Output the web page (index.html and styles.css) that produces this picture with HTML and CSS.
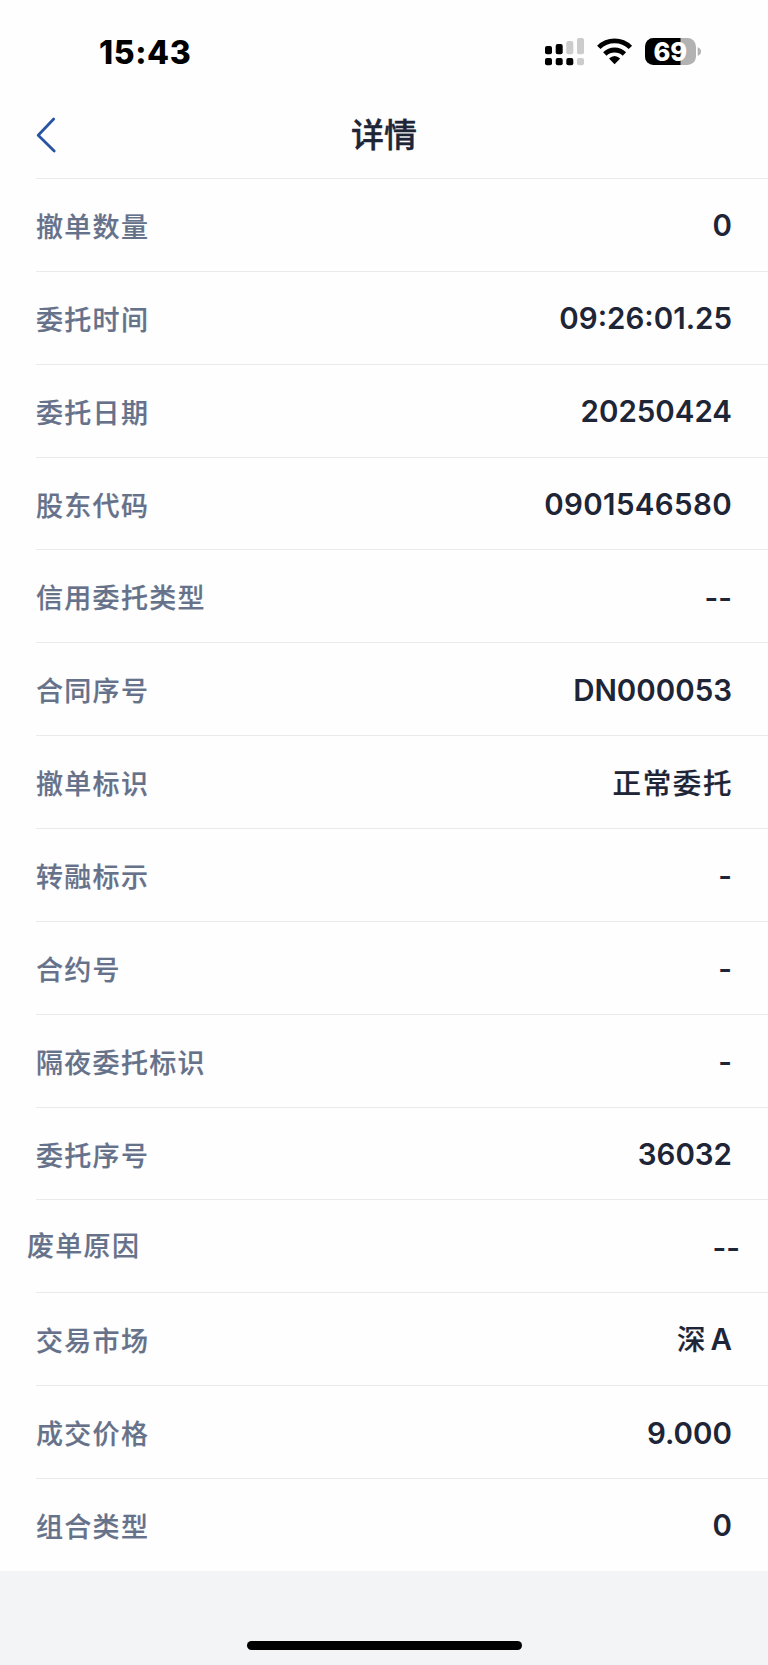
FILE: index.html
```html
<!DOCTYPE html>
<html lang="zh-CN">

<head>
    <meta charset="UTF-8" />
    <meta name="viewport" content="width=device-width, initial-scale=1.0" />
    <title>详情</title>
    <link rel="stylesheet" href="styles.css">
</head>

<body>
    <div class="status-bar">
        <span class="time">15:43</span>
        <svg class="status-icons" width="160" height="30" viewBox="0 0 160 30">
            <!-- dual sim signal -->
            <g fill="#000">
                <rect x="0" y="9" width="7" height="8.3" rx="2" />
                <rect x="10.7" y="7" width="7" height="10.3" rx="2" />
                <rect x="0" y="21" width="7" height="7.3" rx="2" />
                <rect x="10.7" y="21" width="7" height="7.3" rx="2" />
                <rect x="21.3" y="21" width="7" height="7.3" rx="2" />
            </g>
            <g fill="#ccc">
                <rect x="21.3" y="4" width="7" height="13.3" rx="2" />
                <rect x="32" y="1" width="7" height="16.3" rx="2" />
                <rect x="32" y="21" width="7" height="7.3" rx="2" />
            </g>
            <!-- wifi -->
            <g fill="none" stroke="#000" stroke-width="4.8">
                <path d="M53.8 10.4 A22.5 22.5 0 0 1 85.4 10.4" />
                <path d="M59.8 17 A14 14 0 0 1 79.4 17" />
            </g>
            <path d="M64 21.6 Q69.6 16.6 75.2 21.6 L69.6 27.2 Z" fill="#000" />
            <!-- battery -->
            <clipPath id="battery"><rect x="100" y="1" width="51" height="27" rx="8.5" /></clipPath>
            <g clip-path="url(#battery)">
                <rect x="100" y="0" width="51" height="29" fill="#b2b2b2" />
                <rect x="100" y="0" width="35.5" height="29" fill="#000" />
            </g>
            <path d="M152.7 10.3 Q156 11.4 156 14.6 Q156 17.8 152.7 18.9 Z" fill="#b2b2b2" />
            <text class="battery-level" x="125.3" y="23.7" text-anchor="middle">69</text>
        </svg>
    </div>

    <header class="nav-bar">
        <svg class="back" width="22" height="38" viewBox="0 0 22 38">
            <path d="M17.7 3 L2.2 19.2 L18.2 35" fill="none" stroke="#2854a3" stroke-width="2.8" stroke-linecap="round" stroke-linejoin="round" />
        </svg>
        <h1>详情</h1>
    </header>

    <ul class="details">
        <li><span class="label">撤单数量</span><span class="value">0</span></li>
        <li><span class="label">委托时间</span><span class="value">09:26:01.25</span></li>
        <li><span class="label">委托日期</span><span class="value">20250424</span></li>
        <li><span class="label">股东代码</span><span class="value account">0901546580</span></li>
        <li><span class="label">信用委托类型</span><span class="value">--</span></li>
        <li><span class="label">合同序号</span><span class="value">DN000053</span></li>
        <li><span class="label">撤单标识</span><span class="value cjk">正常委托</span></li>
        <li><span class="label">转融标示</span><span class="value">-</span></li>
        <li><span class="label">合约号</span><span class="value">-</span></li>
        <li><span class="label">隔夜委托标识</span><span class="value">-</span></li>
        <li><span class="label">委托序号</span><span class="value">36032</span></li>
        <li class="reason"><span class="label">废单原因</span><span class="value">--</span></li>
        <li><span class="label">交易市场</span><span class="value market"><span class="cjk">深</span> A</span></li>
        <li><span class="label">成交价格</span><span class="value">9.000</span></li>
        <li><span class="label">组合类型</span><span class="value">0</span></li>
    </ul>

    <footer>
        <div class="home-indicator"></div>
    </footer>
</body>

</html>
```
FILE: styles.css
```css
* {
    box-sizing: border-box;
}

body {
    margin: 0;
    height: 1665px;
    display: flex;
    flex-direction: column;
    background-color: #fefefe;
    color: #1e2536;
    font-family: Inter, "Noto Sans CJK SC", sans-serif;
    overflow: hidden;
}

.status-bar {
    height: 90px;
    flex: none;
    display: flex;
    justify-content: space-between;
    padding: 37px 63px 0 99px;
}

.time {
    color: #000;
    font-size: 32px;
    line-height: 32px;
    font-weight: 800;
    letter-spacing: 0.6px;
}

.battery-level {
    fill: #fff;
    font-size: 25.5px;
    font-weight: 800;
}

.nav-bar {
    height: 88px;
    flex: none;
    display: grid;
    grid-template-columns: 1fr auto 1fr;
    align-items: center;
    padding: 2px 36px 0;
}

.nav-bar h1 {
    margin: 0;
    font-size: 33px;
    line-height: 40px;
    font-weight: 500;
    -webkit-text-stroke: 0.4px;
}

.details {
    list-style: none;
    margin: 0;
    padding: 0 0 0 36px;
    height: 1393px;
    flex: none;
    display: flex;
    flex-direction: column;
}

.details li {
    flex: 1;
    display: flex;
    justify-content: space-between;
    align-items: center;
    padding: 1px 36px 0 0;
    border-top: 1px solid #e9eaec;
}

.label {
    margin-top: 5px;
    color: #66718a;
    font-size: 27px;
    line-height: 40px;
    font-weight: 500;
    letter-spacing: 1.3px;
    -webkit-text-stroke: 0.2px;
}

.value {
    font-size: 29.5px;
    line-height: 40px;
    font-weight: 580;
}

.account {
    letter-spacing: 0.35px;
}

.cjk {
    font-size: 28.5px;
    font-weight: 500;
    letter-spacing: 1.6px;
    -webkit-text-stroke: 0.2px;
}

.value.cjk {
    margin: 3px -1px 0 0;
}

.market {
    word-spacing: -4px;
}

.details .reason .label {
    margin: 0 0 0 -9px;
}

.details .reason .value {
    margin-right: -8px;
}

footer {
    flex: 1;
    display: flex;
    justify-content: center;
    align-items: flex-end;
    padding-bottom: 15px;
    background-color: #f2f4f6;
}

.home-indicator {
    width: 275px;
    height: 9px;
    border-radius: 5px;
    background-color: #000;
}
```
